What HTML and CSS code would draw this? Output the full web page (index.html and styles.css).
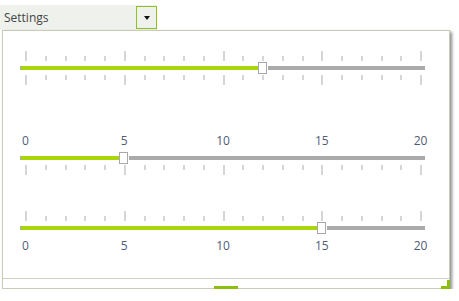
FILE: index.html
```html
<!DOCTYPE html>
<html>
<head>
<meta charset="utf-8">
<link rel="stylesheet" href="styles.css">
</head>
<body>
<div class="header">
  <span class="header-text">Settings</span>
  <span class="drop-btn">
    <svg width="6" height="4" viewBox="0 0 6 4"><path d="M0 0H6L3 4Z" fill="#111"/></svg>
  </span>
</div>
<div class="panel">
  <div class="content">
    <div class="slider s1">
      <div class="ticks top">
        <i class="mj"></i><i></i><i></i><i></i><i></i><i class="mj"></i><i></i><i></i><i></i><i></i><i class="mj"></i><i></i><i></i><i></i><i></i><i class="mj"></i><i></i><i></i><i></i><i></i><i class="mj"></i>
      </div>
      <div class="track" style="--v:12"><div class="fill"></div><div class="thumb"></div></div>
      <div class="ticks bottom">
        <i class="mj"></i><i></i><i></i><i></i><i></i><i class="mj"></i><i></i><i></i><i></i><i></i><i class="mj"></i><i></i><i></i><i></i><i></i><i class="mj"></i><i></i><i></i><i></i><i></i><i class="mj"></i>
      </div>
    </div>
    <div class="slider s2">
      <div class="labels"><span>0</span><span>5</span><span>10</span><span>15</span><span>20</span></div>
      <div class="track" style="--v:5"><div class="fill"></div><div class="thumb"></div></div>
      <div class="ticks bottom">
        <i class="mj"></i><i></i><i></i><i></i><i></i><i class="mj"></i><i></i><i></i><i></i><i></i><i class="mj"></i><i></i><i></i><i></i><i></i><i class="mj"></i><i></i><i></i><i></i><i></i><i class="mj"></i>
      </div>
    </div>
    <div class="slider s3">
      <div class="ticks top">
        <i class="mj"></i><i></i><i></i><i></i><i></i><i class="mj"></i><i></i><i></i><i></i><i></i><i class="mj"></i><i></i><i></i><i></i><i></i><i class="mj"></i><i></i><i></i><i></i><i></i><i class="mj"></i>
      </div>
      <div class="track" style="--v:15"><div class="fill"></div><div class="thumb"></div></div>
      <div class="labels"><span>0</span><span>5</span><span>10</span><span>15</span><span>20</span></div>
    </div>
  </div>
  <div class="footer">
    <span class="grip"></span>
    <svg class="corner" width="9" height="9" viewBox="0 0 9 9"><path d="M6 0H9V9H0V6H6Z" fill="#8cbf0c"/></svg>
  </div>
</div>
</body>
</html>
```

FILE: styles.css
```css
html, body {
  margin: 0;
  padding: 0;
  background: #ffffff;
  font-family: "Open Sans", "Noto Sans", sans-serif;
  font-size: 12px;
}

.header {
  display: flex;
  align-items: center;
  width: 157px;
  height: 25px;
  margin-top: 5px;
  background: #eff1ed;
}

.header-text {
  flex: 1;
  padding-left: 4px;
  line-height: 25px;
  color: #444444;
}

.drop-btn {
  box-sizing: border-box;
  width: 21px;
  height: 23px;
  border: 1px solid #8dc21f;
  display: flex;
  align-items: center;
  justify-content: center;
}

.panel {
  box-sizing: border-box;
  margin-left: 2px;
  width: 448px;
  height: 259px;
  border: 1px solid #c9cbb6;
  background: #ffffff;
  box-shadow: 2px 2px 3px rgba(0, 0, 0, 0.45);
  display: flex;
  flex-direction: column;
  position: relative;
}

.content {
  height: 247px;
  padding: 20px 0 0 17px;
  box-sizing: border-box;
}

.slider {
  width: 405px;
  display: flex;
  flex-direction: column;
}

.s2 { margin-top: 48px; }
.s3 { margin-top: 36px; }

.ticks {
  display: flex;
  justify-content: space-between;
  height: 10px;
  margin: 0 3px 0 5px;
}

.ticks i {
  display: block;
  width: 2px;
  height: 5px;
  background: #d6d6d6;
}

.ticks i.mj { height: 10px; }

.ticks.top { align-items: flex-end; }
.ticks.bottom { align-items: flex-start; }

.s1 .track { margin: 5px 0; }
.s2 .track { margin: 7px 0 5px; }
.s3 .track { margin: 5px 0 8px; }

.track {
  position: relative;
  height: 4px;
  background: #aaaaaa;
}

.fill {
  position: absolute;
  left: 1px;
  top: 0;
  height: 4px;
  width: calc(var(--v) * 19.75px - 0.5px);
  background: #a8d60a;
}

.thumb {
  position: absolute;
  box-sizing: border-box;
  top: -4px;
  left: calc(var(--v) * 19.75px + 0.5px);
  width: 9px;
  height: 12px;
  background: #ffffff;
  border: 1px solid #a8a8a8;
  box-shadow: 1px 0 0 #ffffff;
}

.labels {
  display: flex;
  justify-content: space-between;
  height: 16px;
  margin: 0 -5.5px 0 -4.5px;
  color: #4f5b78;
  line-height: 16px;
}

.labels span {
  width: 20px;
  text-align: center;
}

.footer {
  flex: 1;
  border-top: 1px solid #cfd0bf;
  position: relative;
}

.grip {
  position: absolute;
  left: 211px;
  bottom: -1px;
  width: 24px;
  height: 3px;
  background: #8cbf0c;
}

.corner {
  position: absolute;
  right: -1px;
  bottom: -1px;
}
```
